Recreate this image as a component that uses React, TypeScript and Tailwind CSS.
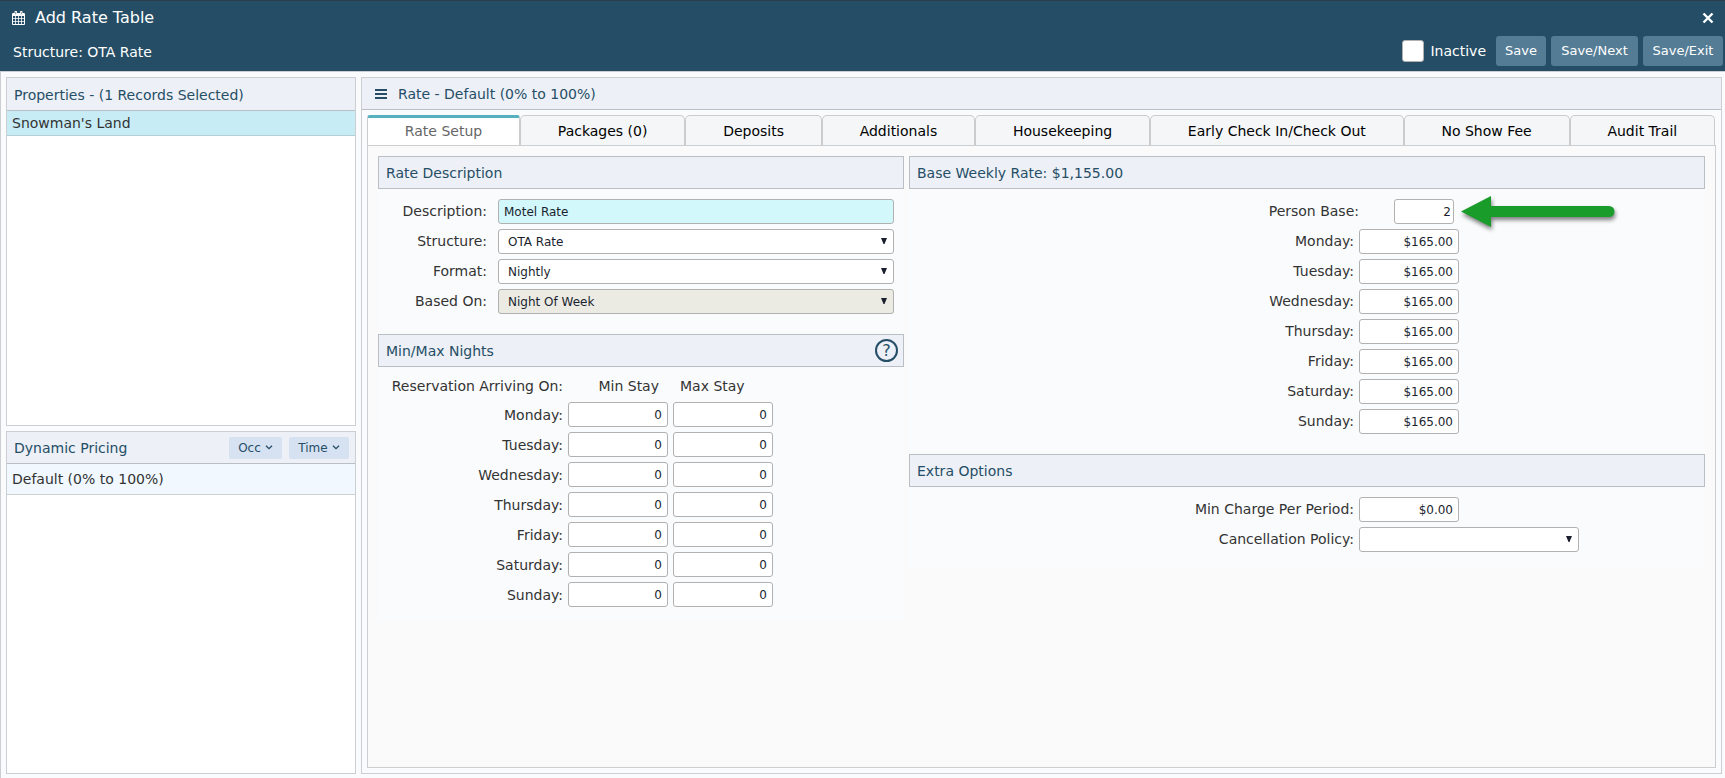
import React from 'react';

const DAYS = ['Monday', 'Tuesday', 'Wednesday', 'Thursday', 'Friday', 'Saturday', 'Sunday'];

const TABS = [
  'Rate Setup',
  'Packages (0)',
  'Deposits',
  'Additionals',
  'Housekeeping',
  'Early Check In/Check Out',
  'No Show Fee',
  'Audit Trail',
];

const FIELD = 'h-[25px] rounded-[3px] border border-[#b1b1b1] text-xs text-[#1b1f2e]';

function PanelHeader({ title, children }: { title: string; children?: React.ReactNode }) {
  return (
    <div className="flex h-[33px] items-center justify-between border border-[#b9bfc5] bg-[#edf0f6] pl-[7px] pr-[5px] text-[#254e66]">
      <h2 className="pt-px">{title}</h2>
      {children}
    </div>
  );
}

interface SelectProps {
  id: string;
  value: string;
  className: string;
}

function Select({ id, value, className }: SelectProps) {
  return (
    <div className={`relative h-[25px] rounded-[3px] ${className}`}>
      <select id={id} defaultValue={value} className={`${FIELD} block w-full appearance-none bg-inherit pl-[9px]`}>
        <option value={value}>{value}</option>
      </select>
      <svg viewBox="0 0 6 6" className="pointer-events-none absolute right-[7px] top-[9px] size-[6px] fill-[#1b1f2e]">
        <path d="M0 0h6L3.5 6h-1z" />
      </svg>
    </div>
  );
}

function CalendarIcon() {
  return (
    <svg viewBox="0 0 13 14" className="h-[14px] w-[13px]">
      <path
        className="fill-white"
        fillRule="evenodd"
        d="M1 2h1.5V.8q0-.8.8-.8h.9q.8 0 .8.8V2h3V.8q0-.8.8-.8h.9q.8 0 .8.8V2H12q1 0 1 1v10q0 1-1 1H1q-1 0-1-1V3q0-1 1-1zM1 5v2.3h2.2V5zM4 5v2.3h2.2V5zM7 5v2.3h2.2V5zM10 5v2.3h2V5zM1 8v2.3h2.2V8zM4 8v2.3h2.2V8zM7 8v2.3h2.2V8zM10 8v2.3h2V8zM1 11v2h2.2v-2zM4 11v2h2.2v-2zM7 11v2h2.2v-2zM10 11v2h2v-2z"
      />
      <path className="fill-none stroke-[#254e66] stroke-[.6]" d="M3.7 1v2.3M9.3 1v2.3" />
    </svg>
  );
}

function Chevron() {
  return (
    <svg viewBox="0 0 8 5" className="h-[5px] w-[8px] fill-none stroke-[#254e66] stroke-[1.3]">
      <path d="M1 .7l3 3 3-3" />
    </svg>
  );
}

function Header() {
  return (
    <header className="flex h-[71px] flex-col border-t border-[#2b3e4b] bg-[#254e66] text-white">
      <div className="flex h-[34px] items-center gap-[10px] pl-3 pr-[11px]">
        <CalendarIcon />
        <h1 className="flex-1 text-base">Add Rate Table</h1>
        <button aria-label="Close">
          <svg viewBox="0 0 12 12" className="size-3 fill-none stroke-white stroke-[2.4]">
            <path d="M1.5 1.5l9 9M10.5 1.5l-9 9" />
          </svg>
        </button>
      </div>
      <div className="flex h-[32px] items-center gap-[5px] pl-[13px] pr-[2px]">
        <p className="flex-1 pt-px">Structure: OTA Rate</p>
        <label className="mr-[5px] flex items-center gap-[6px]">
          <input type="checkbox" className="size-[22px] appearance-none rounded-[3px] border border-[#b1b1b1] bg-white" />
          Inactive
        </label>
        <button className="h-[30px] w-[50px] rounded-[3px] bg-[#547c95] text-[13px]">Save</button>
        <button className="h-[30px] w-[87px] rounded-[3px] bg-[#547c95] text-[13px]">Save/Next</button>
        <button className="h-[30px] w-[80px] rounded-[3px] bg-[#547c95] text-[13px]">Save/Exit</button>
      </div>
    </header>
  );
}

function Sidebar() {
  return (
    <aside className="flex w-[350px] shrink-0 flex-col gap-[5px]">
      <section className="flex h-[349px] flex-col border border-[#cccfd2] bg-white">
        <div className="flex h-[33px] shrink-0 items-center border-b border-[#b9bfc5] bg-[#edf0f6] pl-[7px] text-[#254e66]">
          <h2 className="pt-px">Properties - (1 Records Selected)</h2>
        </div>
        <div className="flex h-[25px] items-center border-b border-[#b5cfd6] bg-[#c8ecf6] pl-[5px]">Snowman's Land</div>
      </section>
      <section className="flex flex-1 flex-col border border-[#cccfd2] bg-white">
        <div className="flex h-[32px] shrink-0 items-center gap-[7px] border-b border-[#b9bfc5] bg-[#edf0f6] pl-[7px] pr-[6px] text-[#254e66]">
          <h2 className="flex-1 pt-px">Dynamic Pricing</h2>
          <button className="flex h-[22px] w-[53px] items-center justify-center gap-1 rounded-[2px] bg-[#d6e1f2] text-xs">
            Occ <Chevron />
          </button>
          <button className="flex h-[22px] w-[60px] items-center justify-center gap-1 rounded-[2px] bg-[#d6e1f2] text-xs">
            Time <Chevron />
          </button>
        </div>
        <div className="flex h-[31px] items-center border-b border-[#cccfd2] bg-[#f1f8ff] pl-[5px]">Default (0% to 100%)</div>
      </section>
    </aside>
  );
}

function Tabs() {
  return (
    <nav role="tablist" className="flex h-[30px] pr-px">
      {TABS.map((tab, i) => (
        <button
          key={tab}
          role="tab"
          aria-selected={i === 0}
          className={
            i === 0
              ? 'flex-auto rounded-t-[3px] border-x border-t-[3px] border-x-[#ccc] border-t-[#55b1bd] bg-white pb-[2px] text-[#666]'
              : 'flex-auto rounded-t-[5px] border-x border-t border-[#ccc] bg-[#f4f6f8] text-black'
          }
        >
          {tab}
        </button>
      ))}
    </nav>
  );
}

function RateDescription() {
  return (
    <section>
      <PanelHeader title="Rate Description" />
      <div className="grid grid-cols-[109px_396px] gap-x-[11px] gap-y-[5px] pt-[10px] leading-[25px]">
        <label htmlFor="description" className="text-right">Description:</label>
        <input id="description" defaultValue="Motel Rate" className={`${FIELD} bg-[#d2f8fb] px-[5px]`} />
        <label htmlFor="structure" className="text-right">Structure:</label>
        <Select id="structure" value="OTA Rate" className="bg-white" />
        <label htmlFor="format" className="text-right">Format:</label>
        <Select id="format" value="Nightly" className="bg-white" />
        <label htmlFor="based-on" className="text-right">Based On:</label>
        <Select id="based-on" value="Night Of Week" className="bg-[#ebebe4]" />
      </div>
    </section>
  );
}

function MinMaxNights() {
  return (
    <section>
      <PanelHeader title="Min/Max Nights">
        <button aria-label="Help" className="size-[23px] rounded-full border-2 border-[#254e66] text-base leading-none">?</button>
      </PanelHeader>
      <table className="mb-[8px] mt-[3px] border-separate border-spacing-x-[5px] border-spacing-y-[5px]">
        <thead>
          <tr className="h-[22px] text-left">
            <th className="w-[180px] p-0 text-right font-normal">Reservation Arriving On:</th>
            <th className="w-[100px] py-0 pr-[9px] text-right font-normal">Min Stay</th>
            <th className="w-[100px] py-0 pl-[7px] font-normal">Max Stay</th>
          </tr>
        </thead>
        <tbody>
          {DAYS.map((day) => (
            <tr key={day}>
              <th className="p-0 text-right font-normal">{day}:</th>
              <td className="p-0">
                <input aria-label={`${day} min stay`} defaultValue="0" className={`${FIELD} block w-[100px] bg-white px-[5px] text-right`} />
              </td>
              <td className="p-0">
                <input aria-label={`${day} max stay`} defaultValue="0" className={`${FIELD} block w-[100px] bg-white px-[5px] text-right`} />
              </td>
            </tr>
          ))}
        </tbody>
      </table>
    </section>
  );
}

function BaseRate() {
  return (
    <section>
      <PanelHeader title="Base Weekly Rate: $1,155.00" />
      <div className="grid grid-cols-[445fr_346fr] gap-x-[5px] gap-y-[5px] pt-[10px] leading-[25px]">
        <label htmlFor="person-base" className="-mr-[5px] text-right">Person Base:</label>
        <div className="flex h-[25px] items-center gap-[7px] pl-[35px]">
          <input id="person-base" defaultValue="2" className={`${FIELD} w-[60px] bg-white px-[2px] text-right`} />
          <svg viewBox="0 0 154 31" className="h-[31px] w-[154px] overflow-visible fill-[#1a9c2b] drop-shadow-[1px_3px_2px_rgba(0,0,0,0.5)]">
            <path d="M0 15.5L30 0v10h118a5.5 5.5 0 0 1 0 11H30v10z" />
          </svg>
        </div>
        {DAYS.map((day) => (
          <React.Fragment key={day}>
            <label htmlFor={`rate-${day}`} className="text-right">{day}:</label>
            <input id={`rate-${day}`} defaultValue="$165.00" className={`${FIELD} w-[100px] bg-white px-[5px] text-right`} />
          </React.Fragment>
        ))}
      </div>
    </section>
  );
}

function ExtraOptions() {
  return (
    <section>
      <PanelHeader title="Extra Options" />
      <div className="grid grid-cols-[445fr_346fr] gap-x-[5px] gap-y-[5px] pt-[10px] leading-[25px]">
        <label htmlFor="min-charge" className="text-right">Min Charge Per Period:</label>
        <input id="min-charge" defaultValue="$0.00" className={`${FIELD} w-[100px] bg-white px-[5px] text-right`} />
        <label htmlFor="cancellation" className="text-right">Cancellation Policy:</label>
        <Select id="cancellation" value="" className="w-[220px] bg-white" />
      </div>
    </section>
  );
}

export default function App() {
  return (
    <div className="flex min-h-screen flex-col bg-[#fafbfd] font-['Verdana','DejaVu_Sans',sans-serif] text-sm text-[#333]">
      <Header />
      <div className="flex flex-1 gap-[5px] border-l border-t border-[#cccfd2] pb-1 pl-[5px] pr-[3px] pt-[5px]">
        <Sidebar />
        <main className="flex min-w-0 flex-1 flex-col border border-[#cccfd2]">
          <div className="flex h-[32px] items-center gap-[11px] border-b border-[#b9bfc5] bg-[#edf0f6] pl-[13px] text-[#254e66]">
            <button aria-label="Menu" className="flex flex-col gap-[2px]">
              <span className="h-[2px] w-3 bg-[#254e66]" />
              <span className="h-[2px] w-3 bg-[#254e66]" />
              <span className="h-[2px] w-3 bg-[#254e66]" />
            </button>
            <h2>Rate - Default (0% to 100%)</h2>
          </div>
          <div className="flex flex-1 flex-col p-[5px]">
            <Tabs />
            <div className="flex flex-1 items-start gap-[5px] border border-[#cccfd2] bg-[#fafafa] px-[10px] pt-[10px]">
              <div className="flex w-[526px] flex-col gap-5 bg-[#fafbfd]">
                <RateDescription />
                <MinMaxNights />
              </div>
              <div className="flex flex-1 flex-col gap-5 bg-[#fafbfd] pb-4">
                <BaseRate />
                <ExtraOptions />
              </div>
            </div>
          </div>
        </main>
      </div>
    </div>
  );
}
